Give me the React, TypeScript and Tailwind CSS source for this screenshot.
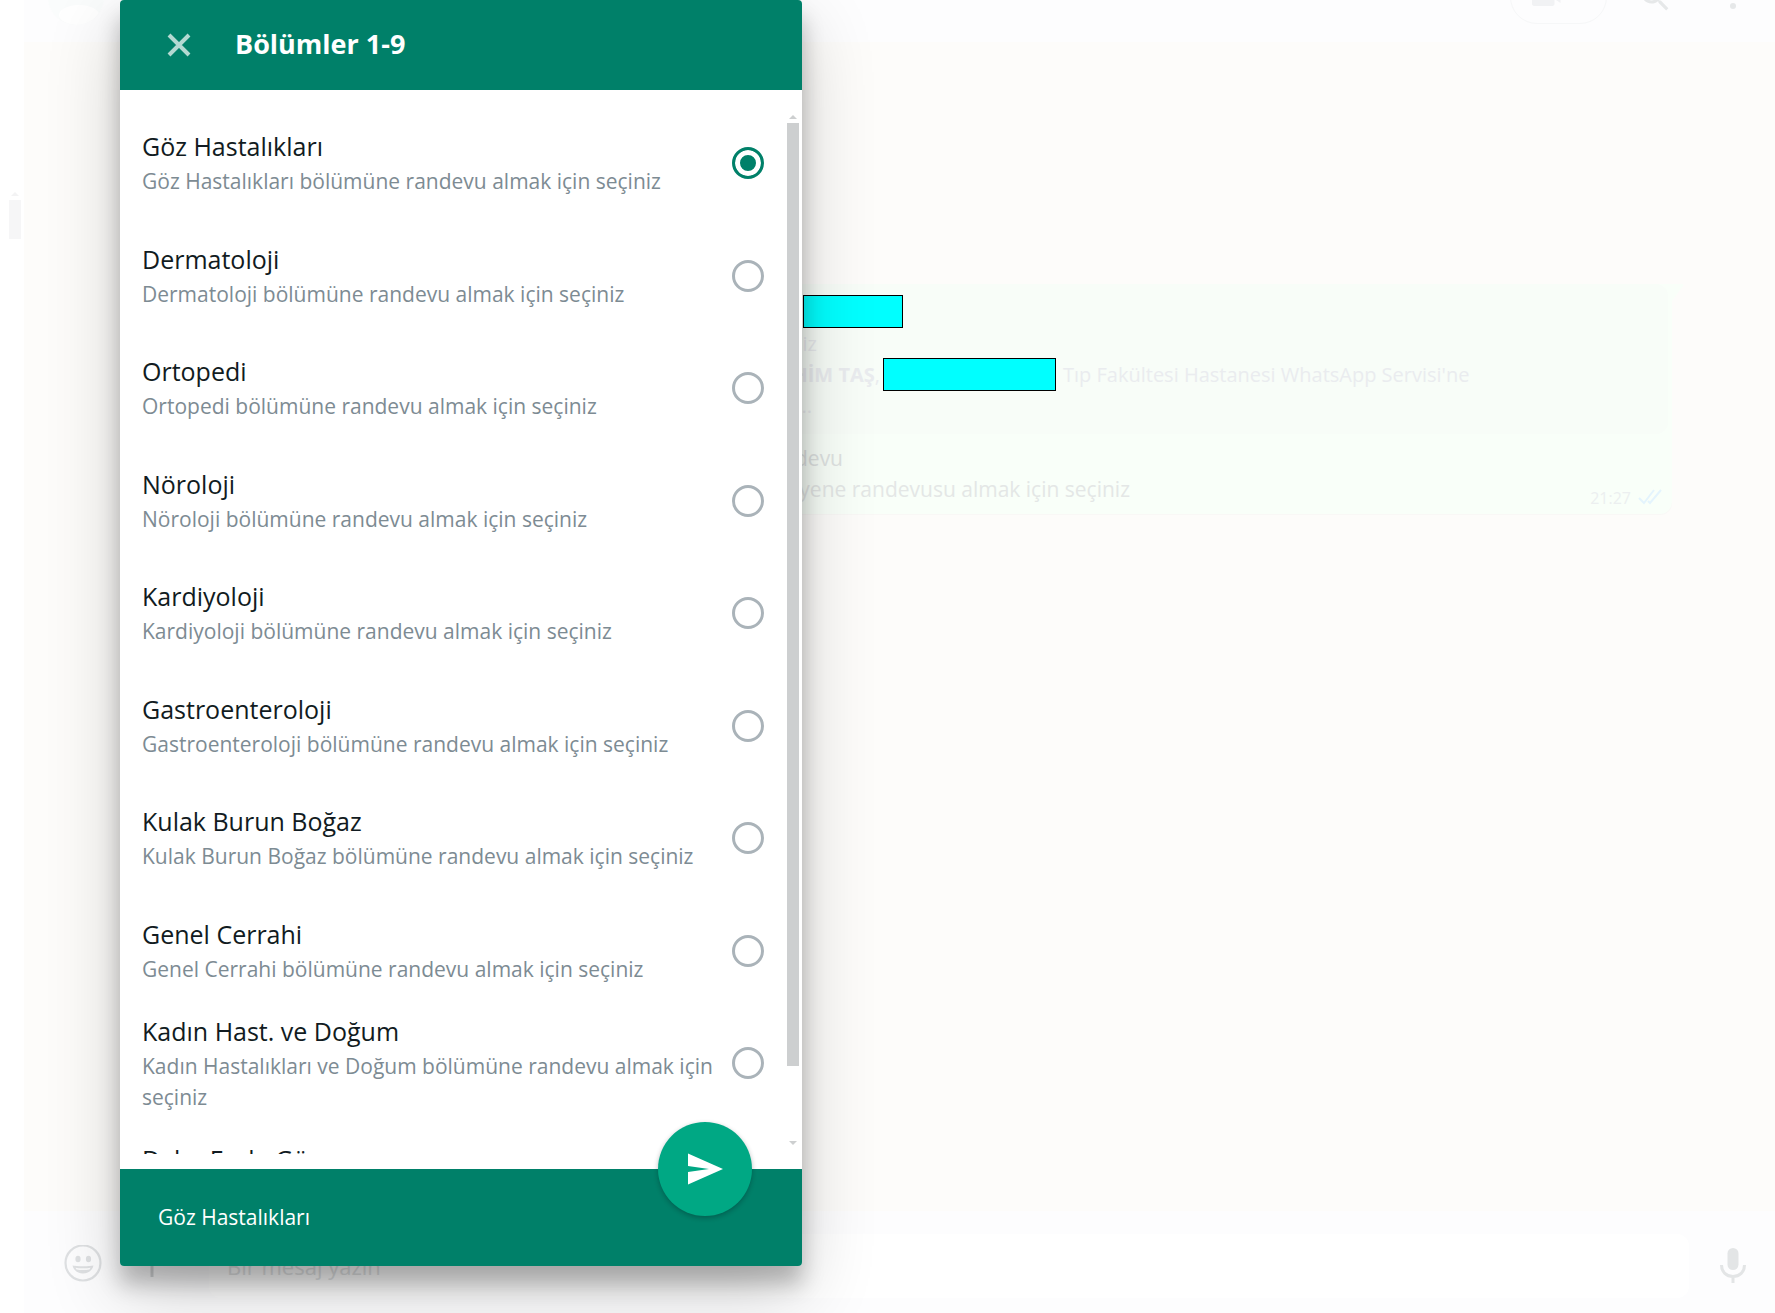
import { useState } from 'react'

const sections = [
  { title: 'Göz Hastalıkları', description: 'Göz Hastalıkları bölümüne randevu almak için seçiniz' },
  { title: 'Dermatoloji', description: 'Dermatoloji bölümüne randevu almak için seçiniz' },
  { title: 'Ortopedi', description: 'Ortopedi bölümüne randevu almak için seçiniz' },
  { title: 'Nöroloji', description: 'Nöroloji bölümüne randevu almak için seçiniz' },
  { title: 'Kardiyoloji', description: 'Kardiyoloji bölümüne randevu almak için seçiniz' },
  { title: 'Gastroenteroloji', description: 'Gastroenteroloji bölümüne randevu almak için seçiniz' },
  { title: 'Kulak Burun Boğaz', description: 'Kulak Burun Boğaz bölümüne randevu almak için seçiniz' },
  { title: 'Genel Cerrahi', description: 'Genel Cerrahi bölümüne randevu almak için seçiniz' },
  { title: 'Kadın Hast. ve Doğum', description: 'Kadın Hastalıkları ve Doğum bölümüne randevu almak için seçiniz' },
  { title: 'Daha Fazla Gör', description: '' },
]

function ChatHeader() {
  return (
    <header className="flex h-[42px] shrink-0 flex-col justify-end overflow-hidden bg-[#fdfdfe]">
      <div className="flex h-[90px] shrink-0 items-center pl-6 pr-6 text-[#e6e8e9]">
        <div className="h-[56px] w-[56px] overflow-hidden rounded-full bg-[#fafcfc]">
          <svg viewBox="0 0 56 56" className="h-full w-full">
            <ellipse cx="31" cy="46" rx="20" ry="10" fill="#ffffff" />
          </svg>
        </div>
        <div className="ml-auto flex items-center">
          <button aria-label="Görüntülü ara" className="mr-[30px] flex h-[54px] w-[97px] items-center rounded-full border border-[#f6f7f8] pl-[18px] text-[#f1f2f4]">
            <svg viewBox="0 0 24 24" className="h-9 w-9" fill="currentColor">
              <path d="M3.300 6C2.600 6 2 6.600 2 7.300V16.700C2 17.400 2.600 18 3.300 18H15.700C16.400 18 17 17.400 17 16.700V13.300L21 16V8L17 10.700V7.300C17 6.600 16.400 6 15.700 6Z" />
            </svg>
          </button>
          <button aria-label="Ara" className="mr-[42px]">
            <svg viewBox="0 0 24 24" className="h-9 w-9" fill="currentColor">
              <path d="M15.900 14.300H15L14.700 14c1-1.100 1.600-2.700 1.600-4.300C16.300 6 13.300 3 9.600 3S3 6 3 9.700s3 6.700 6.700 6.700c1.600 0 3.200-.6 4.300-1.600l.3.300v.8l5.100 5.100 1.500-1.500-5-5.200zm-6.200 0c-2.600 0-4.600-2.100-4.600-4.600s2.100-4.600 4.600-4.600 4.600 2.100 4.600 4.600-2 4.600-4.600 4.600z" />
            </svg>
          </button>
          <button aria-label="Menü">
            <svg viewBox="0 0 24 24" className="h-9 w-9" fill="currentColor">
              <circle cx="12" cy="6" r="2" />
              <circle cx="12" cy="12" r="2" />
              <circle cx="12" cy="18" r="2" />
            </svg>
          </button>
        </div>
      </div>
    </header>
  )
}

function Message() {
  return (
    <div className="ml-[606px] mr-[91px] mt-[242px] flex items-start text-[20px] leading-[31px]">
      <div className="min-w-0 flex-1 rounded-b-xl rounded-tl-xl bg-[#f9fff9] pb-1 shadow-[0_1px_1px_rgba(0,0,0,0.02)]">
        <div className="mr-1 h-[150px] rounded-xl bg-[#f8fdf8] pt-[11px] text-[#eaecef]">
          <div className="flex h-[33px] pl-[173px]">
            <span className="w-[100px] border border-black bg-[#00ffff]" />
          </div>
          <p className="w-[187px] text-right">niz</p>
          <div className="flex h-[31px] items-center whitespace-nowrap">
            <p className="w-[250px] shrink-0 text-right"><b className="font-bold">İBRAHİM TAŞ</b>,</p>
            <span className="ml-[3px] h-[33px] w-[173px] shrink-0 border border-black bg-[#00ffff]" />
            <p className="ml-[7px]">Tıp Fakültesi Hastanesi WhatsApp Servisi'ne</p>
          </div>
          <p className="w-[182px] text-right">...</p>
        </div>
        <p className="mt-[9px] w-[213px] text-right text-[21px] text-[#dfe3e2]">randevu</p>
        <div className="flex items-start justify-between pr-[10px]">
          <p className="w-[500px] text-right text-[21px] text-[#e4e7e6]">Muayene randevusu almak için seçiniz</p>
          <div className="flex h-9 items-end gap-[7px] text-base leading-6 text-[#eceff0]">
            <span>21:27</span>
            <svg viewBox="0 0 24 24" className="h-6 w-6" fill="none" stroke="#e4f4fd" strokeWidth="2">
              <path d="M1 12l5 5L16 4M10 15l2 2L23 4" />
            </svg>
          </div>
        </div>
      </div>
      <svg viewBox="0 0 12 18" className="h-[18px] w-3 shrink-0" fill="#f9fff9">
        <path d="M0 0h10c2 0 2 1 1 2L0 17z" />
      </svg>
    </div>
  )
}

function Composer() {
  return (
    <footer className="flex h-[102px] shrink-0 items-center bg-[#fdfdfe] pl-[38px] pr-6 pt-2 text-[#e3e5e6]">
      <button aria-label="Emoji" className="text-[#dfe1e3]">
        <svg viewBox="0 0 42 42" className="h-[42px] w-[42px]">
          <circle cx="21" cy="18" r="17.500" fill="none" stroke="currentColor" strokeWidth="2.200" />
          <ellipse cx="16" cy="14" rx="2.600" ry="3.300" fill="currentColor" />
          <ellipse cx="26.500" cy="14" rx="2.600" ry="3.300" fill="currentColor" />
          <path d="M10.500 20.500c3.500 1 17.500 1 21 0-1 4.500-5 8-10.500 8s-9.500-3.500-10.500-8z" fill="currentColor" />
          <path d="M13.500 22.700c4 .8 11 .8 15 0l-1 1.800c-4 .8-9 .8-13 0z" fill="#fbfbfc" />
        </svg>
      </button>
      <button aria-label="Ekle" className="ml-[27px] text-[#d5d7d9]">
        <svg viewBox="0 0 42 42" className="h-[42px] w-[42px]" fill="none" stroke="currentColor" strokeWidth="3">
          <path d="M21 5v27M8 18h26" />
        </svg>
      </button>
      <input
        type="text"
        aria-label="Mesaj"
        placeholder="Bir mesaj yazın"
        className="ml-[36px] h-[64px] min-w-0 flex-1 rounded-xl bg-white px-[18px] text-[22px] outline-none placeholder:text-[#e3e5e6]"
      />
      <button aria-label="Sesli mesaj" className="ml-[26px]">
        <svg viewBox="0 0 36 42" className="h-[42px] w-9" fill="none" stroke="currentColor">
          <rect x="12.500" y="3" width="11" height="22" rx="5.500" fill="currentColor" stroke="none" />
          <path d="M6.500 20c0 7 5 11.500 11.500 11.500S29.500 27 29.500 20M18 31v7" strokeWidth="3" />
        </svg>
      </button>
    </footer>
  )
}

export default function App() {
  const [selected, setSelected] = useState(0)

  return (
    <div className="relative flex h-screen overflow-hidden bg-white font-['Open_Sans','Noto_Sans',sans-serif]">
      <aside className="flex w-6 shrink-0 flex-col items-end bg-white pr-[3px] pt-[191px]">
        <svg viewBox="0 0 12 9" className="h-[9px] w-3" fill="#f3f3f4">
          <path d="M2 5l4-4 4 4z" />
        </svg>
        <div className="h-[39px] w-3 bg-[#f6f6f7]" />
      </aside>
      <main className="flex min-w-0 flex-1 flex-col bg-[#fdfcfa]">
        <ChatHeader />
        <div className="min-h-0 flex-1">
          <Message />
        </div>
        <Composer />
      </main>

      <div className="absolute inset-0 pb-[47px] pl-[120px]">
        <div
          role="dialog"
          aria-labelledby="dialog-title"
          className="flex h-full w-[682px] flex-col rounded bg-white shadow-[0_26px_75px_0_rgba(0,0,0,0.19),0_18px_22px_0_rgba(0,0,0,0.24)]"
        >
          <div className="flex h-[90px] shrink-0 items-center rounded-t bg-[#008069] pl-[41px]">
            <button aria-label="Kapat" className="text-[#b3d9d2]">
              <svg viewBox="0 0 36 36" className="h-9 w-9" fill="none" stroke="currentColor" strokeWidth="4">
                <path d="M8 8l20 20M28 8L8 28" />
              </svg>
            </button>
            <h1 id="dialog-title" className="ml-[38px] pb-[2px] text-[27px] font-bold text-white">Bölümler 1-9</h1>
          </div>

          <div className="flex min-h-0 flex-1 pb-[15px] pr-[3px] pt-[17px]">
            <div className="min-w-0 flex-1 overflow-hidden">
              <div role="radiogroup" aria-labelledby="dialog-title" className="grid h-[1125px] grid-rows-10">
                {sections.map((section, i) => (
                  <label key={section.title} className="flex cursor-pointer items-center pl-[22px] pr-[23px]">
                    <span className="min-w-0 flex-1">
                      <span className="mb-[3px] block text-[25px] leading-[34px] text-[#111b21]">{section.title}</span>
                      <span className="block min-h-[31px] text-[21px] leading-[31px] text-[#7d8b93]">{section.description}</span>
                    </span>
                    <input
                      type="radio"
                      name="section"
                      checked={selected === i}
                      onChange={() => setSelected(i)}
                      className="ml-[18px] h-8 w-8 shrink-0 appearance-none rounded-full border-[3px] border-[#aab3b9] bg-white checked:border-[#008069] checked:bg-[#008069] checked:shadow-[inset_0_0_0_5px_white]"
                    />
                  </label>
                ))}
              </div>
            </div>
            <div className="flex w-3 shrink-0 flex-col items-center pb-2 pt-[6px]">
              <svg viewBox="0 0 12 10" className="h-[10px] w-3" fill="#cdcfd0">
                <path d="M2 6l4-4 4 4z" />
              </svg>
              <div className="w-3 flex-1 bg-[#cdcfd0]" />
              <div className="h-[74px]" />
              <svg viewBox="0 0 12 6" className="h-[6px] w-3" fill="#cdcfd0">
                <path d="M2 1l4 4 4-4z" />
              </svg>
            </div>
          </div>

          <div className="relative flex h-[97px] shrink-0 items-center rounded-b bg-[#008069] pl-[38px]">
            <p className="text-[21px] text-white">{sections[selected].title}</p>
            <button
              aria-label="Gönder"
              className="absolute -top-[47px] right-[50px] flex h-[94px] w-[94px] items-center justify-center rounded-full bg-[#00a884] shadow-[0_2px_5px_rgba(11,20,26,0.3)]"
            >
              <svg viewBox="0 0 36 32" className="h-8 w-9" fill="white">
                <path d="M1 0.500L36 16 1 31.500V19l21-3-21-3z" />
              </svg>
            </button>
          </div>
        </div>
      </div>
    </div>
  )
}
